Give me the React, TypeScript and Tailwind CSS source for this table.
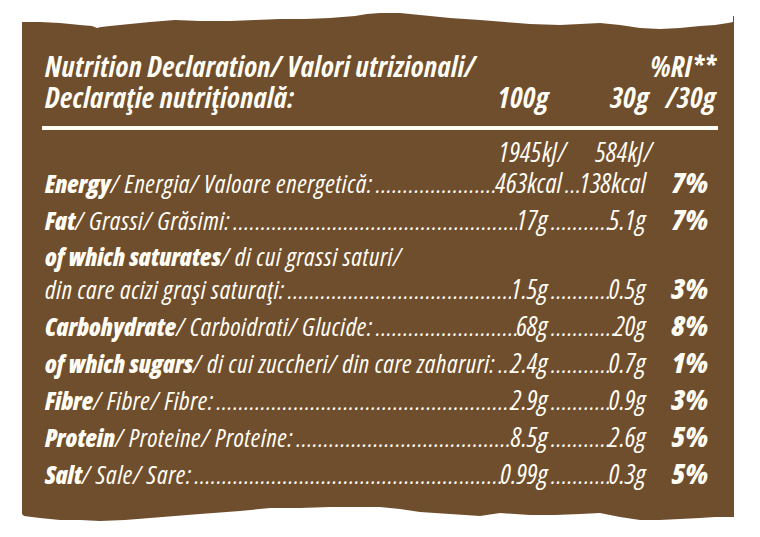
type Item = {
  bold: string;
  rest: string;
  pre?: { bold: string; rest: string };
  v1: string;
  v2: string;
  pct: string;
};

const rows: Item[] = [
  { bold: "Fat", rest: "/ Grassi/ Grăsimi:", v1: "17g", v2: "5.1g", pct: "7%" },
  {
    pre: { bold: "of which saturates", rest: "/ di cui grassi saturi/" },
    bold: "",
    rest: "din care acizi graşi saturaţi:",
    v1: "1.5g",
    v2: "0.5g",
    pct: "3%",
  },
  { bold: "Carbohydrate", rest: "/ Carboidrati/ Glucide:", v1: "68g", v2: "20g", pct: "8%" },
  { bold: "of which sugars", rest: "/ di cui zuccheri/ din care zaharuri:", v1: "2.4g", v2: "0.7g", pct: "1%" },
  { bold: "Fibre", rest: "/ Fibre/ Fibre:", v1: "2.9g", v2: "0.9g", pct: "3%" },
  { bold: "Protein", rest: "/ Proteine/ Proteine:", v1: "8.5g", v2: "2.6g", pct: "5%" },
  { bold: "Salt", rest: "/ Sale/ Sare:", v1: "0.99g", v2: "0.3g", pct: "5%" },
];

const DOTS = ".".repeat(80);

function Leader() {
  return (
    <span className="flex-1 min-w-0 overflow-hidden whitespace-nowrap pl-[3px] pr-[2px] text-[24px] tracking-[0.8px]">
      {DOTS}
    </span>
  );
}

function Label({ bold, rest }: { bold: string; rest: string }) {
  return (
    <span className="whitespace-nowrap">
      {bold && <span className="text-[24.5px] font-extrabold tracking-normal">{bold}</span>}
      <span>{rest}</span>
    </span>
  );
}

function Value({ v }: { v: string }) {
  return <span className="text-[26.5px] tracking-[0.3px] whitespace-nowrap">{v}</span>;
}

function Pct({ v }: { v: string }) {
  return <div className="w-[70px] pr-[8px] text-right text-[29px] font-extrabold tracking-normal">{v}</div>;
}

function Row({ item }: { item: Item }) {
  return (
    <div className="flex flex-col">
      {item.pre && (
        <div className="h-[32px] leading-[32px]">
          <Label bold={item.pre.bold} rest={item.pre.rest} />
        </div>
      )}
      <div className="flex items-baseline h-[32px] leading-[32px]">
        <div className="flex items-baseline w-[503px]">
          <Label bold={item.bold} rest={item.rest} />
          <Leader />
          <Value v={item.v1} />
        </div>
        <div className="flex items-baseline w-[98px]">
          <Leader />
          <Value v={item.v2} />
        </div>
        <Pct v={item.pct} />
      </div>
    </div>
  );
}

export default function App() {
  return (
    <div className="w-[760px] h-[537px] bg-white pl-[22px] pt-[10px] font-['Open_Sans',sans-serif] [font-stretch:75%] italic text-[#fffdf3]">
      <div className="w-[712px]">
        <svg viewBox="0 0 712 20" preserveAspectRatio="none" className="block w-full h-[20px]">
          <polygon
            fill="#6f4e2e"
            points="0,12 18,12 38,13 58,15 70,16 75,18 79,17 88,16 108,14 128,12 153,10 178,11 208,11 233,10 258,9 283,9 308,8 333,6 345,4 358,3 378,3 398,5 428,8 458,10 483,12 508,14 538,15 558,14 578,13 598,15 618,18 638,19 658,18 678,16 693,15 706,13 711,12 711,6 712,6 712,20 0,20"
          />
        </svg>
        <div className="bg-[#6f4e2e] h-[475px] pt-[20px] pl-[23px] pr-[18px]">
          <div className="flex items-end text-[29px] font-bold leading-[31px] tracking-[0.3px]">
            <div className="flex-1 whitespace-nowrap">
              Nutrition Declaration/ Valori utrizionali/
              <br />
              Declaraţie nutriţională:
            </div>
            <div className="w-[80px] text-right pr-[3px]">100g</div>
            <div className="w-[102px] text-right">30g</div>
            <div className="w-[70px] text-right whitespace-nowrap">
              %RI**
              <br />
              /30g
            </div>
          </div>
          <div className="h-[4px] bg-[#fffdf3] mt-[14px] -ml-[3px] -mr-[2px]" />
          <div className="text-[25.5px] tracking-[0.6px] mt-[8px]">
            <div className="flex h-[28px] leading-[28px] text-[26.5px] tracking-[0.6px]">
              <div className="w-[522px] text-right">1945kJ/</div>
              <div className="w-[86px] text-right">584kJ/</div>
            </div>
            <div className="flex items-baseline h-[32px] leading-[32px]">
              <div className="flex items-baseline w-[517px]">
                <Label bold="Energy" rest="/ Energia/ Valoare energetică:" />
                <Leader />
                <Value v="463kcal" />
              </div>
              <div className="flex items-baseline w-[84px]">
                <Leader />
                <Value v="138kcal" />
              </div>
              <Pct v="7%" />
            </div>
            <div className="flex flex-col gap-[5px] mt-[5px]">
              {rows.map((r, i) => (
                <Row key={i} item={r} />
              ))}
            </div>
          </div>
        </div>
        <svg viewBox="0 0 712 20" preserveAspectRatio="none" className="block w-full h-[20px]">
          <polygon
            fill="#6f4e2e"
            points="0,0 712,0 712,12 693,12 678,13 658,14 638,15 618,15 598,12 578,8 558,9 533,10 508,10 478,8 458,11 428,9 398,7 378,4 358,2 333,2 308,2 278,3 248,3 218,6 178,9 153,11 128,13 103,15 78,16 58,15 38,15 18,13 2,11 0,9"
          />
        </svg>
      </div>
    </div>
  );
}
